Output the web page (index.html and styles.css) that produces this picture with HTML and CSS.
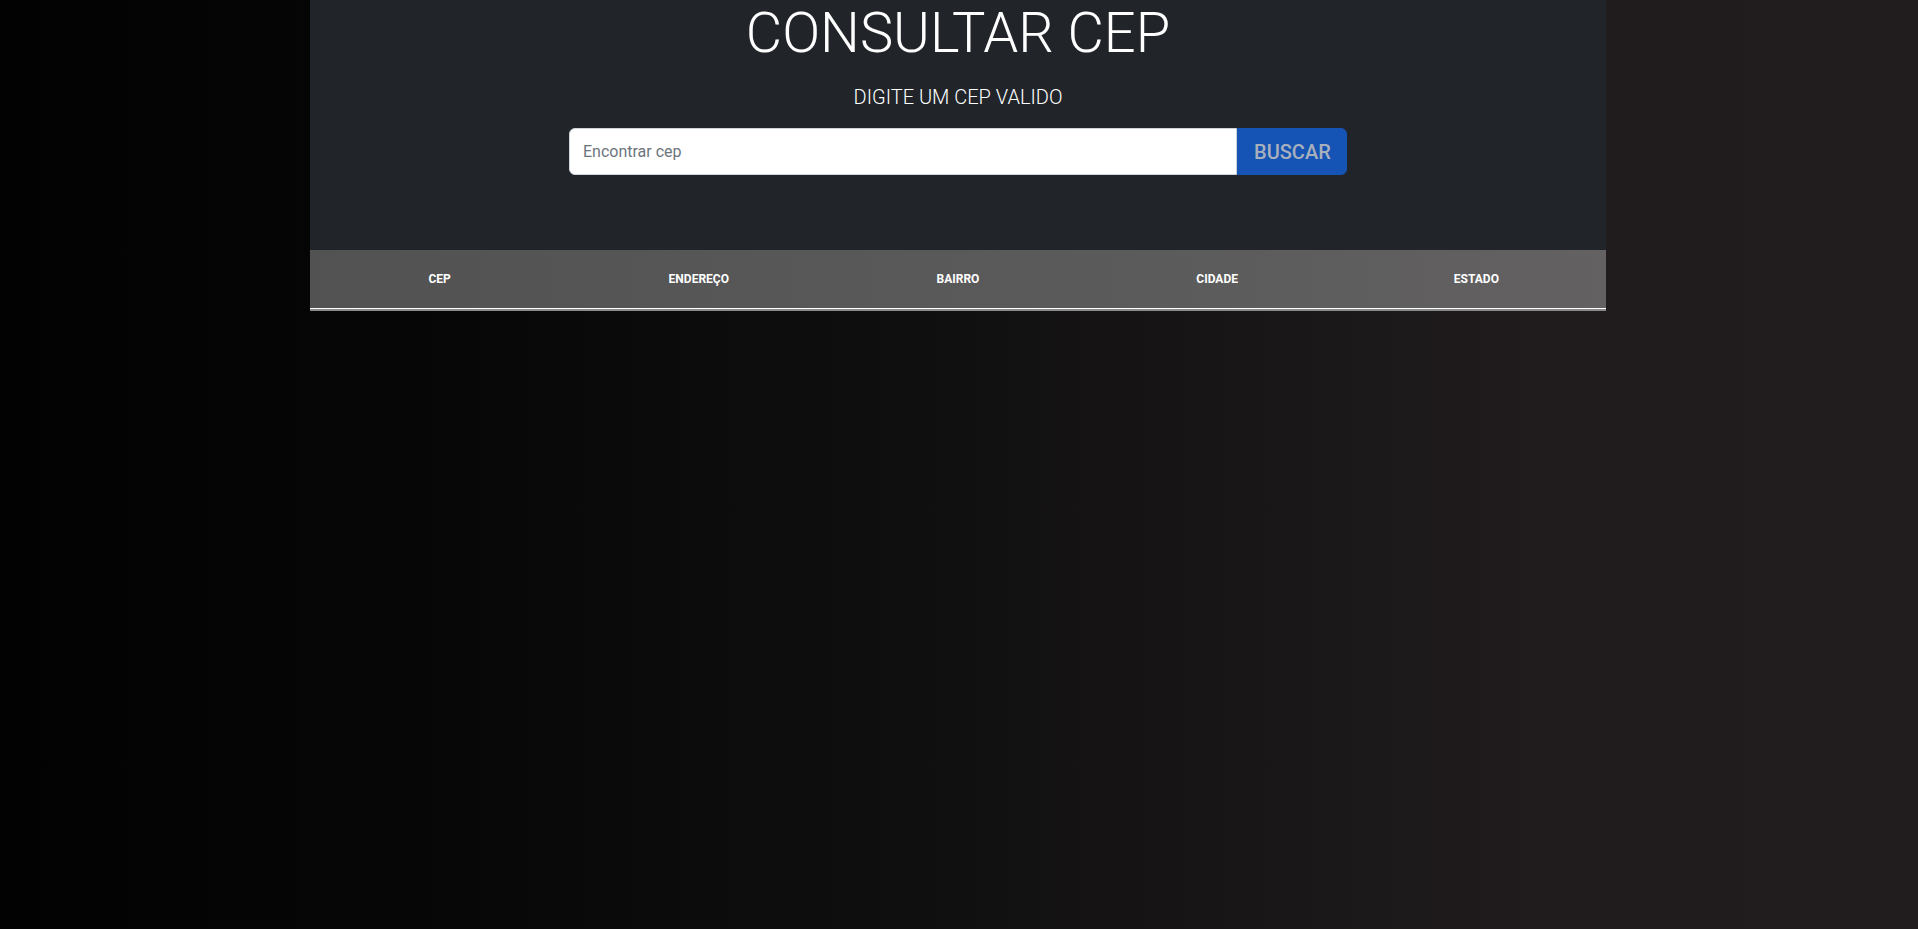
FILE: index.html
```html
<!DOCTYPE html>
<html lang="pt-BR">
<head>
<meta charset="utf-8">
<title>Consultar CEP</title>
<link rel="stylesheet" href="styles.css">
</head>
<body>
  <main class="container">
    <section class="hero">
      <h1 class="hero-title">CONSULTAR CEP</h1>
      <p class="hero-lead">DIGITE UM CEP VALIDO</p>
      <form class="search-group">
        <input class="search-input" type="text" placeholder="Encontrar cep">
        <button class="search-btn" type="button">BUSCAR</button>
      </form>
    </section>
    <table class="result-table">
      <thead>
        <tr>
          <th>CEP</th>
          <th>ENDEREÇO</th>
          <th>BAIRRO</th>
          <th>CIDADE</th>
          <th>ESTADO</th>
        </tr>
      </thead>
      <tbody></tbody>
    </table>
  </main>
</body>
</html>
```

FILE: styles.css
```css
* {
  box-sizing: border-box;
}

html, body {
  height: 100%;
}

body {
  margin: 0;
  min-height: 929px;
  background: linear-gradient(to right, #020202 0%, #060606 20%, #111010 50%, #201c1d 80%, #211d1e 100%);
  font-family: Roboto, "Noto Sans", "Liberation Sans", sans-serif;
  color: #fff;
}

.container {
  width: 1296px;
  margin: 0 auto;
  transform: translateX(-1px);
}

.hero {
  background: #212529;
  height: 250px;
  display: flex;
  flex-direction: column;
  align-items: center;
}

.hero-title {
  margin: 0;
  font-size: 56px;
  font-weight: 300;
  line-height: 1.2;
  color: #fff;
}

.hero-lead {
  margin: 15px 0 0;
  font-size: 20px;
  font-weight: 300;
  line-height: 30px;
  color: #fff;
}

.search-group {
  margin: 16px 0 0;
  width: 778px;
  height: 47px;
  display: flex;
}

.search-input {
  flex: 1;
  min-width: 0;
  height: 47px;
  padding: 0 13px;
  font-family: inherit;
  font-size: 16px;
  color: #212529;
  background: #fff;
  border: 1px solid #ced4da;
  border-radius: 6px 0 0 6px;
  outline: none;
}

.search-input::placeholder {
  color: #6c757d;
}

.search-btn {
  width: 110px;
  height: 47px;
  padding: 0 16px;
  font-family: inherit;
  font-size: 20px;
  font-weight: 500;
  color: #a9b0bd;
  background: #1554b4;
  border: 1px solid #1554b4;
  border-radius: 0 6px 6px 0;
}

.result-table {
  width: 100%;
  border-collapse: separate;
  border-spacing: 0;
  table-layout: fixed;
}

.result-table thead tr {
  background: linear-gradient(to right, #525252, #575757 35%, #5d5c5c 70%, #636161);
}

.result-table th {
  height: 59px;
  padding: 0;
  font-size: 12px;
  font-weight: 700;
  color: #fff;
  text-align: center;
  vertical-align: middle;
  border-bottom: 1px solid #fff;
  box-shadow: 0 2px 0 #8a8a8a;
  background-clip: padding-box;
}
```
